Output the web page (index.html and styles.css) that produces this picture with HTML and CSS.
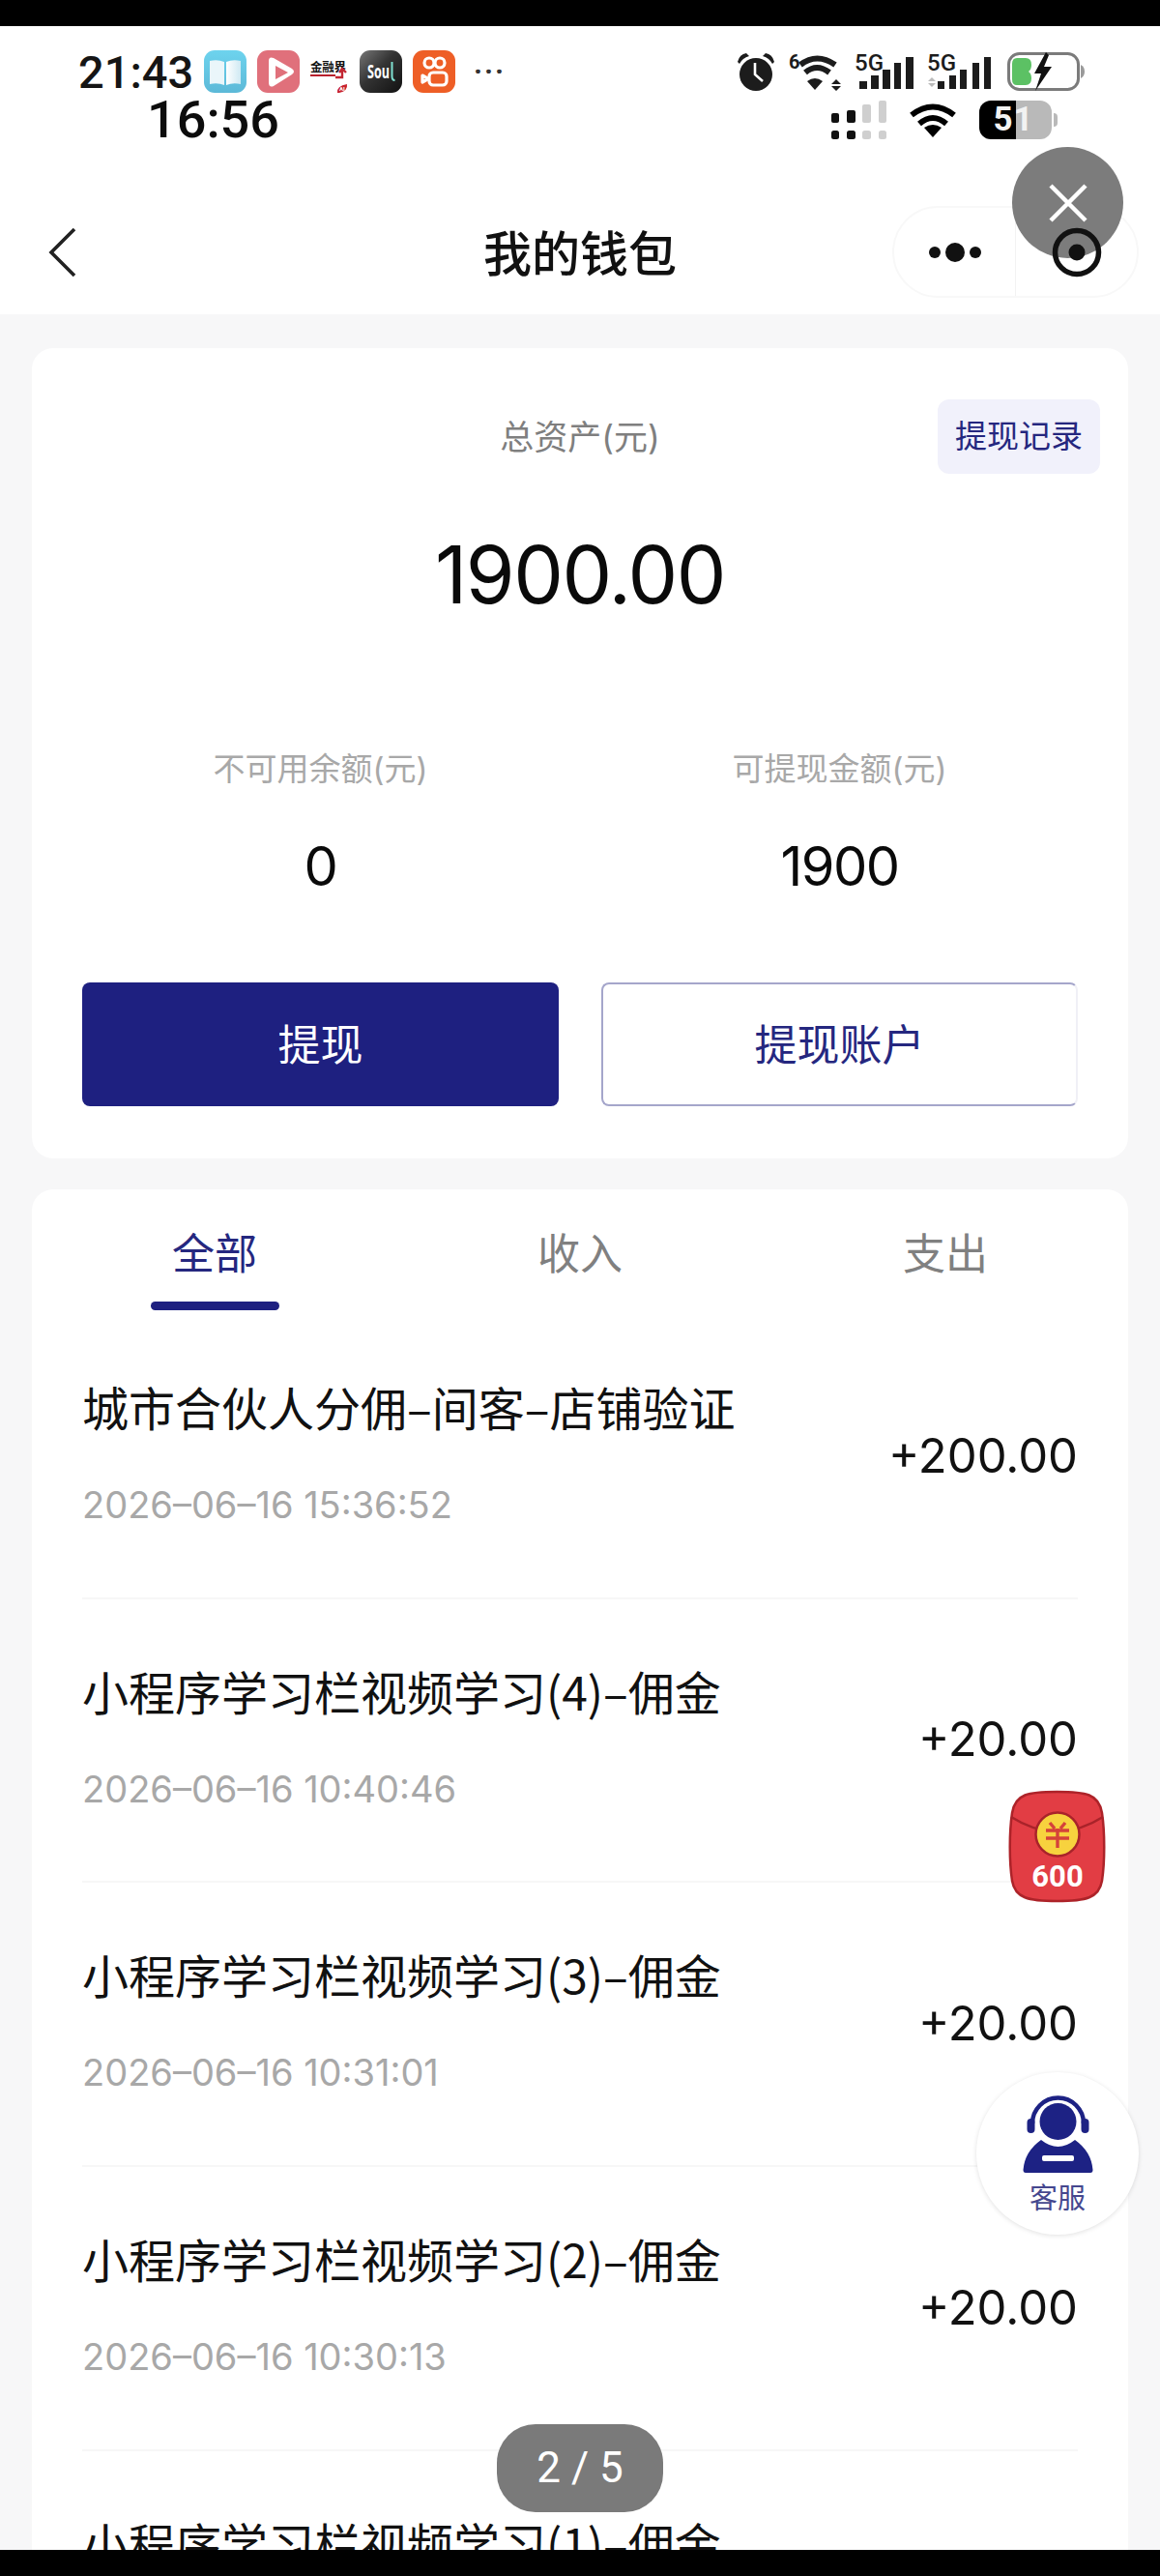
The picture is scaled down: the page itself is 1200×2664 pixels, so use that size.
FILE: index.html
```html
<!DOCTYPE html>
<html lang="zh-CN">
<head>
<meta charset="utf-8">
<title>我的钱包</title>
<link rel="stylesheet" href="styles.css">
</head>
<body>
<div class="screen">
  <div class="black-bar"></div>
  <div class="viewport">
    <header class="top">
      <div class="status-row status-row-a">
        <span class="clock clock-a">21:43</span>
        <div class="apps">
          <svg class="app" viewBox="0 0 44 44"><defs><linearGradient id="bk" x1="0" y1="0" x2="0" y2="1"><stop offset="0" stop-color="#6dd3ee"/><stop offset="1" stop-color="#5cb9d8"/></linearGradient><linearGradient id="pg" x1="0" y1="0" x2="1" y2="0"><stop offset="0" stop-color="#fff"/><stop offset="1" stop-color="#cfe9f3"/></linearGradient></defs><rect width="44" height="44" rx="11" fill="url(#bk)"/><path d="M6 11 Q14 9 21 12 V36 Q14 33 6 35Z" fill="#eaf6fa"/><path d="M38 11 Q30 9 23 12 V36 Q30 33 38 35Z" fill="url(#pg)"/></svg>
          <svg class="app" viewBox="0 0 44 44"><rect width="44" height="44" rx="11" fill="#e0707b"/><path d="M12 11 Q12 6 17 8 L36 19 Q40 22 36 25 L17 37 Q12 39 12 33Z" fill="#fff"/><path d="M19 16 L32 23 L19 30Z" fill="#e0707b"/></svg>
          <svg class="app app-jrj" viewBox="0 0 40 44"><text x="0" y="22" class="jrj-name" textLength="37">金融界</text><rect x="0" y="25" width="26" height="2" fill="#b8202c"/><path d="M26 28 H33 V20 M30 23 L33 19 L37 23" fill="none" stroke="#c22632" stroke-width="2.4"/><path d="M28 44 Q27 37 38 35 Q39 42 30 44Z" fill="#c8222e"/><text x="30" y="42" class="jrj-ai">AI</text></svg>
          <svg class="app" viewBox="0 0 44 44"><defs><linearGradient id="sl" x1="0" y1="0" x2="1" y2="1"><stop offset="0" stop-color="#777"/><stop offset=".45" stop-color="#333"/><stop offset="1" stop-color="#111"/></linearGradient></defs><rect width="44" height="44" rx="11" fill="url(#sl)"/><text x="8" y="29" class="soul-name" textLength="23" lengthAdjust="spacingAndGlyphs">Sou</text><path d="M33.500 12 V27 Q33.500 31 36.500 31" fill="none" stroke="#7fe0d0" stroke-width="2"/></svg>
          <svg class="app" viewBox="0 0 44 44"><rect width="44" height="44" rx="11" fill="#ee5e26"/><g fill="none" stroke="#fff" stroke-width="3.200"><circle cx="17" cy="13" r="5"/><circle cx="28" cy="13" r="5"/><rect x="17" y="23" width="18" height="13" rx="4"/><path d="M10 26 L16 29.500 L10 33Z" stroke-linejoin="round"/></g></svg>
          <span class="more">···</span>
        </div>
        <div class="indicators">
          <svg class="ind" width="40" height="40" viewBox="0 0 40 40"><circle cx="20" cy="23" r="17" fill="#1c1c1c"/><path d="M1 10 Q3 2 10 1 L13 4 Q6 6 3 12Z M39 10 Q37 2 30 1 L27 4 Q34 6 37 12Z" fill="#1c1c1c"/><path d="M19 11 V23 L27 30" fill="none" stroke="#fff" stroke-width="2.600"/></svg>
          <svg class="ind" width="54" height="40" viewBox="0 0 54 40"><text x="0" y="17" class="net-six">6</text><path d="M12 13 Q29 0 48 13 M17 21 Q29 11 42 21" fill="none" stroke="#1c1c1c" stroke-width="6"/><path d="M27 39 L19 30 Q27 24 35 30Z" fill="#1c1c1c"/><path d="M44 33 L49 28 L54 33Z M44 35 L49 40 L54 35Z" fill="#1c1c1c"/></svg>
          <svg class="ind" width="61" height="40" viewBox="0 0 61 40"><text x="0" y="19" class="net-g">5G</text><path d="M5 30h8v8H5z M17 24h8v14H17z M29 18h8v20H29z M41 11h7v27H41z M53 5h8v33H53z" fill="#1c1c1c"/></svg>
          <svg class="ind" width="66" height="40" viewBox="0 0 66 40"><text x="0" y="19" class="net-g">5G</text><path d="M1 30 L5 26 L9 30Z M1 32 L5 36 L9 32Z" fill="#bbb"/><path d="M11 30h7v8h-7z M23 24h7v14h-7z M34 18h7v20h-7z M47 11h7v27h-7z M59 5h7v33h-7z" fill="#1c1c1c"/></svg>
          <svg class="ind ind-batt" width="80" height="40" viewBox="0 0 80 40"><rect x="1.500" y="1.500" width="72" height="37" rx="11" fill="#fff" stroke="#7b7b7b" stroke-width="3"/><path d="M10 6 H19 Q25 6 25 13 Q25 18 22 20 Q25 22 25 27 Q25 34 19 34 H10 Q5 34 5 28 V12 Q5 6 10 6Z" fill="#5cc164"/><path d="M40 0 L28 22 H35 L29 40 L46 15 H38 L43 3Z" fill="#111"/><path d="M76 13 Q80 15 80 20 Q80 25 76 27Z" fill="#9a9a9a"/></svg>
        </div>
      </div>
      <div class="status-row status-row-b">
        <span class="clock clock-b">16:56</span>
        <div class="indicators indicators-b">
          <svg class="ind" width="58" height="40" viewBox="0 0 58 40"><g fill="#111"><rect x="1" y="13" width="8" height="10" rx="2"/><rect x="17" y="10" width="9" height="13" rx="2"/><rect x="1" y="31" width="8" height="9" rx="2.500"/><rect x="17" y="31" width="9" height="9" rx="2.500"/></g><g fill="#cfcfcf"><rect x="33" y="4" width="9" height="19" rx="2"/><rect x="50" y="0" width="8" height="23" rx="2"/><rect x="33" y="31" width="9" height="9" rx="2.500"/><rect x="50" y="31" width="8" height="9" rx="2.500"/></g></svg>
          <svg class="ind" width="50" height="38" viewBox="0 0 50 38"><path d="M3 14 Q25 -3 47 14 M11 23 Q25 11 39 23" fill="none" stroke="#000" stroke-width="6"/><path d="M25 37 L16 27 Q25 21 34 27Z" fill="#000"/></svg>
          <div class="battery-b"><span class="battery-b-level">51</span><i class="battery-b-nub"></i></div>
        </div>
      </div>
      <nav class="nav">
        <svg class="back" width="30" height="52" viewBox="0 0 30 52"><path d="M27 2 L3 26 L27 50" fill="none" stroke="#222" stroke-width="3.600"/></svg>
        <h1 class="nav-title">我的钱包</h1>
        <div class="capsule">
          <div class="capsule-cell"><svg width="64" height="22" viewBox="0 0 64 22"><circle cx="11" cy="11" r="6" fill="#111"/><circle cx="32" cy="11" r="10" fill="#111"/><circle cx="53" cy="11" r="6" fill="#111"/></svg></div>
          <div class="capsule-cell capsule-cell-last"><svg class="target" width="52" height="52" viewBox="0 0 52 52"><circle cx="26" cy="26" r="22.500" fill="none" stroke="#111" stroke-width="5.500"/><circle cx="26" cy="26" r="8.500" fill="#111"/></svg></div>
        </div>
      </nav>
    </header>

    <main class="content">
      <section class="card wallet">
        <div class="total-row">
          <span class="total-label">总资产(元)</span>
          <span class="record-chip">提现记录</span>
        </div>
        <div class="total-value">1900.00</div>
        <div class="balances">
          <div class="balance"><div class="balance-label">不可用余额(元)</div><div class="balance-value">0</div></div>
          <div class="balance"><div class="balance-label">可提现金额(元)</div><div class="balance-value">1900</div></div>
        </div>
        <div class="actions">
          <button class="btn btn-solid">提现</button>
          <button class="btn btn-outline">提现账户</button>
        </div>
      </section>

      <section class="card ledger">
        <div class="tabs">
          <div class="tab tab-active">全部</div>
          <div class="tab">收入</div>
          <div class="tab">支出</div>
        </div>
        <div class="rows">
          <div class="row"><div class="row-title">城市合伙人分佣–间客–店铺验证</div><div class="row-amount">+200.00</div><div class="row-time">2026–06–16 15:36:52</div></div>
          <div class="row"><div class="row-title">小程序学习栏视频学习(4)–佣金</div><div class="row-amount">+20.00</div><div class="row-time">2026–06–16 10:40:46</div></div>
          <div class="row"><div class="row-title">小程序学习栏视频学习(3)–佣金</div><div class="row-amount">+20.00</div><div class="row-time">2026–06–16 10:31:01</div></div>
          <div class="row"><div class="row-title">小程序学习栏视频学习(2)–佣金</div><div class="row-amount">+20.00</div><div class="row-time">2026–06–16 10:30:13</div></div>
          <div class="row"><div class="row-title">小程序学习栏视频学习(1)–佣金</div></div>
        </div>
      </section>
    </main>

    <div class="close-circle"><svg width="40" height="40" viewBox="0 0 40 40"><path d="M2 2 L38 38 M38 2 L2 38" stroke="#fff" stroke-width="4.500" fill="none"/></svg></div>

    <svg class="envelope" viewBox="0 0 101 117"><path d="M50.500 2 C80 2 94 4 97 24 C100 44 100 74 97 94 C94 112 80 115 50.500 115 C21 115 7 112 4 94 C1 74 1 44 4 24 C7 4 21 2 50.500 2Z" fill="#e23d44" stroke="#ad2329" stroke-width="2.500"/><path d="M3 28 Q25 42 50 44 Q76 42 98 28" fill="none" stroke="#a9232a" stroke-width="2.500"/><circle cx="51" cy="46" r="22.500" fill="#f7d23e" stroke="#a9232a" stroke-width="2.500"/><path d="M43 34 L48 40 M59 34 L54 40 M39 42 H63 M39 50 H63 M51 40 V60" fill="none" stroke="#d5423a" stroke-width="3.400"/><text x="51" y="100" class="envelope-amount">600</text></svg>

    <div class="service">
      <svg width="73" height="80" viewBox="0 0 73 80"><circle cx="36.500" cy="27" r="19" fill="#1d2284"/><path d="M10 29 A26.500 26.500 0 0 1 63 29" fill="none" stroke="#1d2284" stroke-width="4.500"/><rect x="4.500" y="24" width="8" height="15" rx="4" fill="#1d2284"/><rect x="60.500" y="24" width="8" height="15" rx="4" fill="#1d2284"/><path d="M0.500 77 Q2 58 19 46 Q36.500 60 54 46 Q71 58 72.500 77 Q72.500 80 70 80 H3 Q0.500 80 0.500 77Z" fill="#1d2284"/><rect x="20" y="62" width="33" height="6" rx="2" fill="#fff"/></svg>
      <span class="service-label">客服</span>
    </div>

    <div class="pager">2 / 5</div>
  </div>
  <div class="black-bar"></div>
</div>
</body>
</html>
```
FILE: styles.css
```css
* { box-sizing: border-box; }
html, body { margin: 0; padding: 0; }
body {
  width: 1200px;
  height: 2664px;
  overflow: hidden;
  font-family: Inter, "Noto Sans CJK SC", sans-serif;
  background: #000;
}
.screen {
  display: grid;
  grid-template-rows: 27px 2610px 27px;
  height: 2664px;
}
.black-bar { background: #000; }
.viewport {
  position: relative;
  overflow: hidden;
  background: #f7f7f8;
}

/* status rows and nav */
.top {
  height: 298px;
  background: #fff;
  padding-top: 25px;
}
.status-row {
  display: flex;
  align-items: center;
  justify-content: space-between;
}
.status-row-a { height: 44px; padding: 0 78px 0 81px; }
.status-row-b { height: 40px; margin-top: 8px; padding: 0 106px 0 152px; }
.clock {
  font-family: Roboto, sans-serif;
  font-weight: 500;
  color: #151515;
  line-height: 1;
}
.clock-a { font-size: 47px; width: 130px; }
.clock-b { font-size: 54px; color: #0c0c0c; }
.apps {
  display: flex;
  align-items: center;
  gap: 11px;
  margin-right: auto;
}
.app { width: 44px; height: 44px; flex: none; overflow: visible; }
.app-jrj { width: 40px; }
.jrj-name { font: 700 12.500px "Noto Sans CJK SC", sans-serif; fill: #111; }
.jrj-ai { font: 700 6px Roboto, sans-serif; fill: #fff; }
.soul-name { font: 700 19px "Open Sans", sans-serif; fill: #fff; }
.more {
  margin-left: 8px;
  font: 700 30px/1 Roboto, sans-serif;
  color: #333;
  letter-spacing: 2px;
}
.indicators {
  display: flex;
  align-items: center;
  gap: 14px;
}
.indicators-b { gap: 23px; }
.ind { flex: none; display: block; overflow: visible; }
.ind-batt { margin-left: 3px; }
.net-six { font: 700 20px Roboto, sans-serif; fill: #1c1c1c; }
.net-g { font: 500 24px Roboto, sans-serif; fill: #1c1c1c; }
.battery-b {
  position: relative;
  width: 75px;
  height: 40px;
  border-radius: 12px;
  background: linear-gradient(90deg, #000 0 38px, #b9b9b9 38px);
  margin-right: 6px;
}
.battery-b-level {
  display: block;
  text-align: center;
  font: 700 35px/40px Roboto, sans-serif;
  color: #f2f2f2;
  letter-spacing: 1px;
  margin-left: -4px;
}
.battery-b-nub {
  position: absolute;
  right: -6px;
  top: 13px;
  width: 4px;
  height: 14px;
  border-radius: 0 4px 4px 0;
  background: #b9b9b9;
}
.nav {
  display: grid;
  grid-template-columns: 1fr auto 1fr;
  align-items: center;
  margin-top: 69px;
  height: 95px;
  padding: 0 22px;
}
.back { display: block; margin-left: 28px; }
.nav-title {
  margin: 0;
  font: 500 50px/1 "Noto Sans CJK SC", sans-serif;
  color: #111;
  position: relative;
  bottom: 2px;
}
.capsule {
  justify-self: end;
  display: flex;
  width: 255px;
  height: 95px;
  border: 2px solid #f8f8f8;
  border-radius: 48px;
}
.capsule-cell {
  flex: 1;
  display: flex;
  align-items: center;
  justify-content: center;
}
.capsule-cell-last { border-left: 1px solid #f3f3f3; }
.target { position: relative; z-index: 3; display: block; }

/* cards */
.content {
  display: flex;
  flex-direction: column;
  gap: 32px;
  padding: 35px 33px 0;
}
.card {
  background: #fff;
  border-radius: 22px;
}
.wallet { height: 838px; padding: 53px 52px 54px; }
.total-row {
  display: grid;
  grid-template-columns: 1fr auto 1fr;
  align-items: center;
  margin: 0 -23px;
}
.total-label {
  grid-column: 2;
  font-size: 35px;
  line-height: 50px;
  color: #7f7f7f;
}
.record-chip {
  grid-column: 3;
  justify-self: end;
  width: 168px;
  height: 77px;
  border-radius: 12px;
  background: #f1f1fb;
  color: #25277f;
  font-size: 33px;
  line-height: 77px;
  text-align: center;
}
.total-value {
  margin-top: 55px;
  font-size: 82px;
  line-height: 100px;
  letter-spacing: -1.500px;
  text-align: center;
  color: #0a0a0a;
}
.balances {
  display: grid;
  grid-template-columns: 1fr 1fr;
  gap: 44px;
  margin-top: 125px;
  text-align: center;
}
.balance-label {
  font-size: 33px;
  line-height: 50px;
  color: #a8a8a8;
}
.balance-value {
  margin-top: 41px;
  font-size: 56px;
  line-height: 70px;
  letter-spacing: -1.500px;
  color: #0a0a0a;
}
.actions {
  display: grid;
  grid-template-columns: 1fr 1fr;
  gap: 44px;
  margin-top: 85px;
}
.btn {
  height: 128px;
  border-radius: 8px;
  font-family: "Noto Sans CJK SC", sans-serif;
  font-size: 44px;
  padding: 0 0 5px;
}
.btn-solid {
  border: 0;
  background: #1e2080;
  color: #fff;
}
.btn-outline {
  border: 2px solid #a5a6cb;
  border-right-color: #f0f0f6;
  background: #fff;
  color: #25277f;
}
.ledger { padding-bottom: 40px; }
.tabs {
  display: grid;
  grid-template-columns: repeat(3, 1fr);
  padding-top: 37px;
  text-align: center;
}
.tab {
  font-size: 44px;
  line-height: 60px;
  color: #808080;
}
.tab-active { color: #25277f; }
.tab-active::after {
  content: "";
  display: block;
  width: 133px;
  height: 9px;
  margin: 19px auto 0;
  border-radius: 5px;
  background: #1e2080;
}
.rows { margin-top: 5px; padding: 0 52px; }
.row {
  display: grid;
  grid-template-columns: 1fr auto;
  align-items: center;
  padding: 64px 0 70.700px;
  border-bottom: 2px solid #f7f7f7;
}
.row-title {
  font-family: "Noto Sans CJK SC", sans-serif;
  font-size: 48px;
  line-height: 60px;
  color: #111;
}
.row-amount {
  grid-column: 2;
  grid-row: 1 / span 2;
  margin-top: 6px;
  font-size: 49px;
  line-height: 60px;
  color: #111;
}
.row-time {
  margin-top: 47px;
  font-size: 38px;
  line-height: 50px;
  color: #a8a8a8;
}

/* floating overlays */
.close-circle {
  position: absolute;
  left: 1047px;
  top: 125px;
  z-index: 2;
  width: 115px;
  height: 115px;
  border-radius: 50%;
  background: #7c7c7c;
  display: flex;
  align-items: center;
  justify-content: center;
}
.envelope {
  position: absolute;
  left: 1043px;
  top: 1824px;
  width: 101px;
  height: 117px;
}
.envelope-amount {
  font: 700 31px Roboto, sans-serif;
  fill: #fff;
  text-anchor: middle;
}
.service {
  position: absolute;
  left: 1010px;
  top: 2116px;
  width: 168px;
  height: 168px;
  border-radius: 50%;
  background: #fff;
  box-shadow: 0 1px 5px rgba(0, 0, 0, .12);
  display: flex;
  flex-direction: column;
  align-items: center;
  padding-top: 24px;
}
.service-label {
  margin-top: 4px;
  font: 400 29px/40px "Noto Sans CJK SC", sans-serif;
  color: #45478e;
}
.pager {
  position: absolute;
  left: 514px;
  top: 2480px;
  width: 172px;
  height: 91px;
  border-radius: 40px;
  background: #7a7a7a;
  color: #fff;
  font-family: Roboto, sans-serif;
  font-size: 44px;
  line-height: 91px;
  text-align: center;
}
```
